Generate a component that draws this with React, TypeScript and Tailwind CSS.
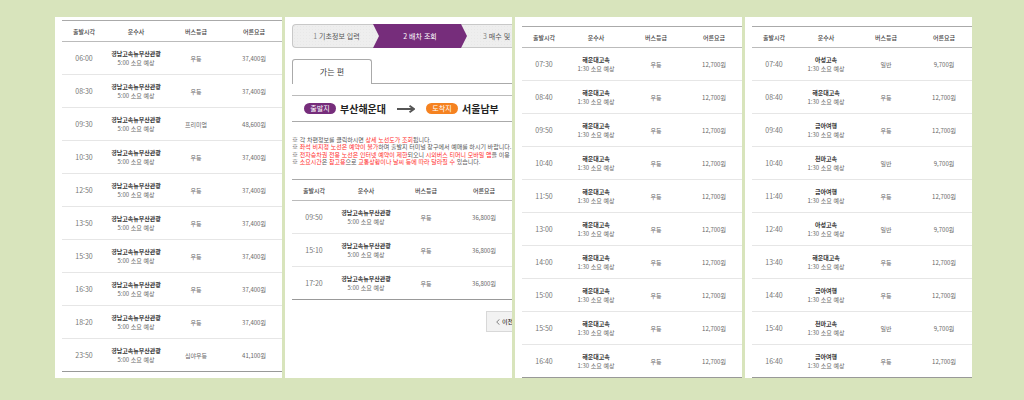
import React from "react";

type Departure = [time: string, company: string, grade: string, fare: string];

const BUSAN = "경남고속뉴부산관광";
const HAEUNDAE = "해운대고속";

const morning: Departure[] = [
  ["06:00", BUSAN, "우등", "37,400원"],
  ["08:30", BUSAN, "우등", "37,400원"],
  ["09:30", BUSAN, "프리미엄", "48,600원"],
  ["10:30", BUSAN, "우등", "37,400원"],
  ["12:50", BUSAN, "우등", "37,400원"],
  ["13:50", BUSAN, "우등", "37,400원"],
  ["15:30", BUSAN, "우등", "37,400원"],
  ["16:30", BUSAN, "우등", "37,400원"],
  ["18:20", BUSAN, "우등", "37,400원"],
  ["23:50", BUSAN, "심야우등", "41,100원"],
];

const south: Departure[] = [
  ["09:50", BUSAN, "우등", "36,800원"],
  ["15:10", BUSAN, "우등", "36,800원"],
  ["17:20", BUSAN, "우등", "36,800원"],
];

const haeundae: Departure[] = [
  "07:30", "08:40", "09:50", "10:40", "11:50", "13:00", "14:00", "15:00", "15:50", "16:40",
].map((time): Departure => [time, HAEUNDAE, "우등", "12,700원"]);

const mixed: Departure[] = [
  ["07:40", "아성고속", "일반", "9,700원"],
  ["08:40", HAEUNDAE, "우등", "12,700원"],
  ["09:40", "금아여행", "우등", "12,700원"],
  ["10:40", "천마고속", "일반", "9,700원"],
  ["11:40", "금아여행", "우등", "12,700원"],
  ["12:40", "아성고속", "일반", "9,700원"],
  ["13:40", HAEUNDAE, "우등", "12,700원"],
  ["14:40", "금아여행", "우등", "12,700원"],
  ["15:40", "천마고속", "일반", "9,700원"],
  ["16:40", "금아여행", "우등", "12,700원"],
];

function Timetable({ rows, duration }: { rows: Departure[]; duration: string }) {
  return (
    <table className="w-full table-fixed border-separate border-spacing-0 text-center text-[6px] leading-[9px] whitespace-nowrap text-[#666]">
      <thead>
        <tr className="text-[#444] *:h-[22px] *:border-t *:border-b *:border-t-[#aaa] *:border-b-[#bbb] *:p-0 *:font-medium">
          <th scope="col" className="w-1/5">출발시각</th>
          <th scope="col" className="w-3/11">운수사</th>
          <th scope="col" className="w-3/11">버스등급</th>
          <th scope="col">어른요금</th>
        </tr>
      </thead>
      <tbody className="[&>tr:last-child>td]:border-[#999]">
        {rows.map(([time, company, grade, fare]) => (
          <tr key={time} className="*:h-[33px] *:border-b *:border-[#e6e6e6] *:p-0">
            <td className="text-[7px] text-[#777]">{time}</td>
            <td>
              <strong className="block font-bold text-[#333]">{company}</strong>
              <span className="block">{duration} 소요 예상</span>
            </td>
            <td>{grade}</td>
            <td>{fare}</td>
          </tr>
        ))}
      </tbody>
    </table>
  );
}

function Steps() {
  return (
    <ol className="flex h-6 items-stretch rounded-l-[4px] border border-r-0 border-[#c8c8c8] bg-[#eee] bg-[radial-gradient(#e8e8e8_1px,transparent_1px)] bg-[length:3px_3px] text-[7px] leading-none whitespace-nowrap text-[#555]">
      <li className="flex w-[87px] shrink-0 items-center justify-center">
        <span>
          <span className="text-[#888]">1</span> 기초정보 입력
        </span>
      </li>
      <li
        aria-current="step"
        className="-my-px -ml-[7px] flex w-[94px] shrink-0 items-center justify-center bg-[#762d7b] text-white [clip-path:polygon(0_0,calc(100%-6px)_0,100%_50%,calc(100%-6px)_100%,0_100%,6px_50%)]"
      >
        2 배차 조회
      </li>
      <li className="flex items-center pl-4">
        <span>
          <span className="text-[#888]">3</span> 매수 및
        </span>
      </li>
    </ol>
  );
}

function Red({ children }: { children: React.ReactNode }) {
  return <span className="text-[#ff2a2a]">{children}</span>;
}

function Booking() {
  return (
    <>
      <Steps />
      <div className="mt-[11px] flex">
        <button
          type="button"
          className="h-[25px] w-[80px] shrink-0 rounded-t-[3px] border border-b-0 border-[#aaa] bg-white text-[8px] leading-none text-[#444]"
        >
          가는 편
        </button>
        <div className="grow border-b border-[#aaa]" />
      </div>

      <div className="mt-[11px] flex h-[27px] items-center border-y border-t-[#bbb] border-b-[#aaa] pl-3 leading-none whitespace-nowrap">
        <span className="flex h-[11px] w-8 shrink-0 items-center justify-center rounded-full bg-[#762d7b] text-[7px] text-white">
          출발지
        </span>
        <strong className="ml-1 text-[10px] font-bold text-[#222]">부산해운대</strong>
        <svg viewBox="0 0 18 8" className="ml-[11px] h-2 w-[18px] shrink-0" fill="none" stroke="#555" strokeWidth="1.8" aria-hidden="true">
          <path d="M0 4h17M12.500 .7 17 4l-4.500 3.300" />
        </svg>
        <span className="ml-[11px] flex h-[11px] w-8 shrink-0 items-center justify-center rounded-full bg-[#f58220] text-[7px] text-white">
          도착지
        </span>
        <strong className="ml-1 text-[10px] font-bold text-[#222]">서울남부</strong>
      </div>

      <div className="mt-[14px] flex h-[29px] flex-col justify-between text-[6px] leading-[7px] whitespace-nowrap text-[#555]">
        <p>※ 각 차편정보를 클릭하시면 <Red>상세 노선도가 조회</Red>됩니다.</p>
        <p>※ <Red>좌석 비지정 노선은 예약이 불가</Red>하며 출발지 터미널 창구에서 예매를 하시기 바랍니다.</p>
        <p>※ <Red>전자승차권 전용 노선은 인터넷 예약이 제한</Red>되오니 <Red>시외버스 티머니 모바일 앱</Red>을 이용</p>
        <p>※ <Red>소요시간</Red>은 <Red>참고용</Red>으로 <Red>교통상황이나 날씨 등에 따라 달라질 수</Red> 있습니다.</p>
      </div>

      <div className="mt-[14px]">
        <Timetable rows={south} duration="5:00" />
      </div>

      <div className="mt-[11px] flex justify-end">
        <button
          type="button"
          className="-mr-4 flex h-[21px] w-[42px] items-center gap-[2px] border border-[#d8d8d8] bg-[#f2f2f2] pl-[9px] text-[6px] leading-none font-medium whitespace-nowrap text-[#333]"
        >
          <svg viewBox="0 0 4 6" className="h-[6px] w-1 shrink-0" fill="none" stroke="#666" strokeWidth=".8" aria-hidden="true">
            <path d="M3.500 .3.700 3l2.800 2.700" />
          </svg>
          이전
        </button>
      </div>
    </>
  );
}

export default function App() {
  return (
    <main
      lang="ko"
      className="min-h-screen bg-[#d8e4bc] pt-[17px] pr-[52px] pb-[22px] pl-[55px] font-['Noto_Sans_CJK_KR',sans-serif]"
    >
      <div className="grid grid-cols-4 gap-[3px] *:min-w-0 *:overflow-hidden *:bg-white *:pl-[7px]">
        <section className="pt-[3px]">
          <Timetable rows={morning} duration="5:00" />
        </section>
        <section className="pt-[7px]">
          <Booking />
        </section>
        <section className="pt-[9px]">
          <Timetable rows={haeundae} duration="1:30" />
        </section>
        <section className="pt-[9px]">
          <Timetable rows={mixed} duration="1:30" />
        </section>
      </div>
    </main>
  );
}
